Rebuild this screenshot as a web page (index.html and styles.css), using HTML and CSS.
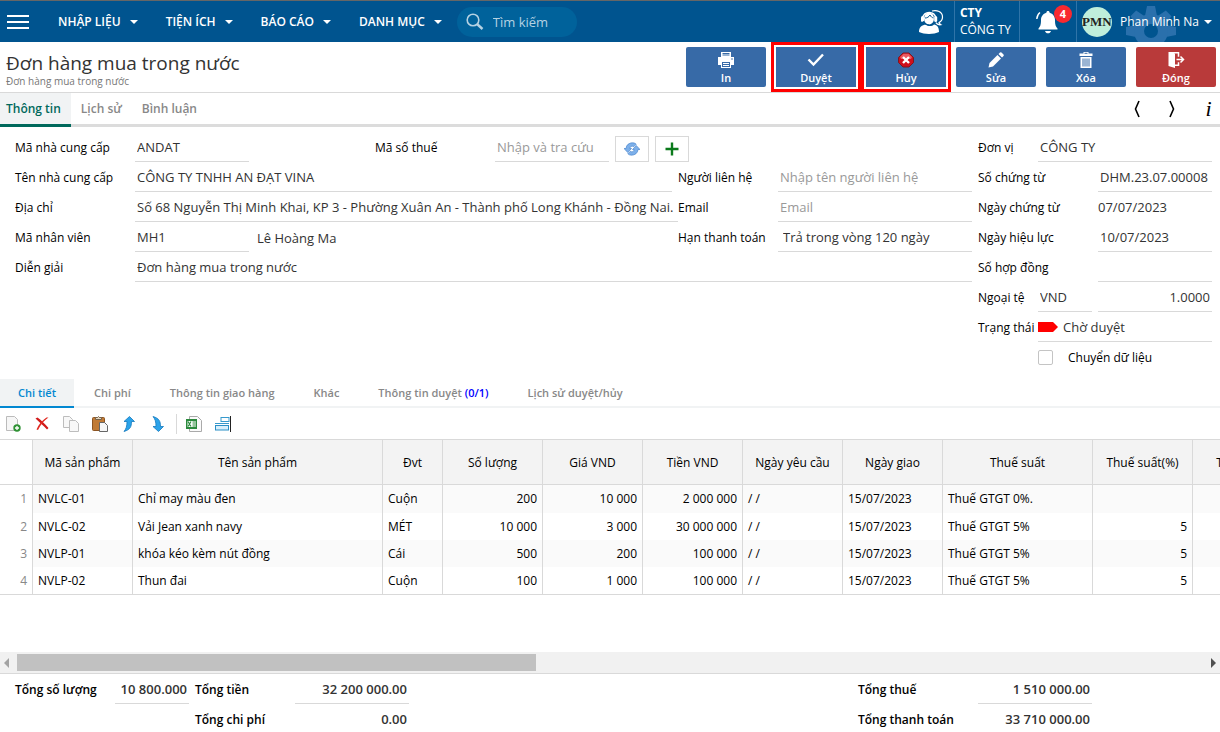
FILE: index.html
```html
<!DOCTYPE html>
<html lang="vi">
<head>
<meta charset="utf-8">
<meta name="viewport" content="width=device-width, initial-scale=1">
<title>Đơn hàng mua trong nước</title>
<link rel="stylesheet" href="styles.css">
</head>
<body>
<header class="topbar">
  <button class="burger" aria-label="Menu"><span></span><span></span><span></span></button>
  <nav class="menu">
    <button class="menu-item">NHẬP LIỆU<i class="caret"></i></button>
    <button class="menu-item">TIỆN ÍCH<i class="caret"></i></button>
    <button class="menu-item">BÁO CÁO<i class="caret"></i></button>
    <button class="menu-item">DANH MỤC<i class="caret"></i></button>
  </nav>
  <div class="search">
    <svg width="18" height="18" viewBox="0 0 18 18" fill="none" stroke="#b5d2e3" stroke-width="1.600"><circle cx="7" cy="7" r="5.800"/><path d="M11 11l5.500 5" stroke-width="2.400"/></svg>
    <input type="text" placeholder="Tìm kiếm" aria-label="Tìm kiếm">
  </div>
  <div class="account">
    <button class="support" aria-label="Hỗ trợ">
      <svg width="26" height="26" viewBox="0 0 26 26"><path d="M14 2c5-1.500 10.500 1 10.500 6 0 3-1.500 4.500-3.500 5.500.3 1 1 1.700 1.800 2.200-2 .3-4-.5-5-2" fill="none" stroke="#fff" stroke-width="1.200"/><path d="M1 23c0-5 3-7 7-7.500 2 2 6 2 8 0 3 .5 5 2.500 5 7.500-5 2.500-15 2.500-20 0z" fill="#fff"/><path d="M4.500 9a7 7.500 0 0 1 13.500 0" fill="none" stroke="#fff" stroke-width="1.500"/><ellipse cx="11" cy="9.500" rx="5" ry="6" fill="#fff"/><rect x="3" y="7" width="3" height="6" rx="1.500" fill="#fff"/><rect x="16.200" y="7" width="3" height="6" rx="1.500" fill="#fff"/><path d="M7 9c2 0 4-1 5-3 1 2 2 2.500 3.500 3" fill="none" stroke="#00548f"/><path d="M5 12c1 3 3 4 6 4" fill="none" stroke="#00548f"/></svg>
    </button>
    <div class="company"><b>CTY</b><span>CÔNG TY</span></div>
    <button class="bell" aria-label="Thông báo">
      <svg width="24" height="24" viewBox="0 0 24 24"><path d="M12 1c1 0 1.600.7 1.600 1.700C17 3.500 19 6.500 19 10c0 5 .8 6.500 2.500 8.500V19.500h-19V18.500C4.200 16.500 5 15 5 10c0-3.500 2-6.500 5.400-7.300C10.400 1.700 11 1 12 1zM9 21h6c-.5 1.600-1.600 2.300-3 2.300S9.500 22.600 9 21z" fill="#fff"/><path d="M4 2.500C2 4 1 6 .8 9M20 2.500c2 1.500 3 3.500 3.200 6.500" fill="none" stroke="#fff" stroke-width="1.400"/></svg>
      <span class="badge">4</span>
    </button>
    <button class="user">
      <svg class="gear" width="50" height="36" viewBox="0 0 50 36"><g fill="#2a70ac"><path d="M21 0h8l2 10H19z"/><path d="M21 0h8l2 10H19z" transform="rotate(45 25 25)"/><path d="M21 0h8l2 10H19z" transform="rotate(90 25 25)"/><path d="M21 0h8l2 10H19z" transform="rotate(-45 25 25)"/><path d="M21 0h8l2 10H19z" transform="rotate(-90 25 25)"/><circle cx="25" cy="25" r="17"/></g><circle cx="25" cy="25" r="7" fill="#00548f"/></svg>
      <span class="avatar">PMN</span><span class="user-name">Phan Minh Na</span><i class="caret"></i>
    </button>
  </div>
</header>

<section class="titlebar">
  <div>
    <h1>Đơn hàng mua trong nước</h1>
    <p>Đơn hàng mua trong nước</p>
  </div>
  <div class="actions">
    <button class="action"><svg width="18" height="16" viewBox="0 0 18 16"><path d="M4 0h10v5H4z" fill="#fff"/><path d="M5.500 1.500h7M5.500 3h7" stroke="#376aa7" stroke-width="1"/><path d="M1 5h16v8h-3v3H4v-3H1z" fill="#fff"/><path d="M5 10h8v5H5z" fill="#376aa7"/><path d="M6 11.500h6M6 13.500h6" stroke="#fff"/><circle cx="15" cy="7" r=".8" fill="#376aa7"/></svg>In</button>
    <button class="action marked"><svg width="18" height="16" viewBox="0 0 18 16"><path d="M1.500 7.500l5 5L16 2.500" fill="none" stroke="#fff" stroke-width="2.400"/></svg>Duyệt</button>
    <button class="action marked"><svg width="18" height="16" viewBox="0 0 18 16"><path d="M6 1h6l4.500 4.500v5L12 15H6l-4.500-4.500v-5z" fill="#d00f1b" stroke="#7d1720"/><path d="M3 5l3.500-3.200h5L15 5l-1 2H4z" fill="#ea5a61"/><path d="M6 5l6 6M12 5l-6 6" stroke="#fff" stroke-width="2.400"/></svg>Hủy</button>
    <button class="action"><svg width="18" height="16" viewBox="0 0 18 16" fill="#fff"><path d="M1.500 15.500l1-4.500L10.500 3 14 6.500 6 14.500zM11.500 2L13 .5q.8-.7 1.500 0l2 2q.7.800 0 1.500L15 5.500z"/></svg>Sửa</button>
    <button class="action"><svg width="18" height="16" viewBox="0 0 18 16"><path d="M2.500 1.500h4V0h5v1.500h4V4h-13zM3.500 5h11v11h-11z" fill="#fff"/><path d="M7.500 1.300h3M6 6.500v8M8 6.500v8M10 6.500v8M12 6.500v8" stroke="#376aa7"/></svg>Xóa</button>
    <button class="action danger"><svg width="18" height="16" viewBox="0 0 18 16"><path d="M1.500 0h5l1.500 2v14l-6.500-2z" fill="#fff"/><path d="M2 .8h9.500v4M8 13.300h3.500v-3" fill="none" stroke="#fff" stroke-width="1.500"/><path d="M9.500 7.500h7M13.500 4.500l3 3-3 3" fill="none" stroke="#fff" stroke-width="1.500"/></svg>Đóng</button>
  </div>
</section>

<nav class="tabs">
  <button class="tab active">Thông tin</button>
  <button class="tab">Lịch sử</button>
  <button class="tab">Bình luận</button>
  <div class="pager">
    <button aria-label="Trước"><svg width="8" height="18" viewBox="0 0 8 18"><path d="M6 1L2.500 9 6 17" fill="none" stroke="#000" stroke-width="1.600"/></svg></button>
    <button aria-label="Sau"><svg width="8" height="18" viewBox="0 0 8 18"><path d="M2 1l3.500 8L2 17" fill="none" stroke="#000" stroke-width="1.600"/></svg></button>
    <button class="info" aria-label="Chi tiết">i</button>
  </div>
</nav>

<form class="form">
  <div class="general">
    <label for="ncc">Mã nhà cung cấp</label>
    <div class="line wide">
      <input id="ncc" class="code" value="ANDAT">
      <label for="mst" class="tax">Mã số thuế</label>
      <input id="mst" class="code" placeholder="Nhập và tra cứu">
      <button type="button" class="square" aria-label="Tra cứu"><svg width="16" height="14" viewBox="0 0 16 14"><g fill="#7db0ea" stroke="#4a86cf" stroke-width=".7"><path d="M0 6.500h2C2.200 3 5 .8 8.500.8c1.500 0 2.700.5 3.700 1.400L9.800 4.600C7.800 3.600 6 4.500 5.800 6.500h1.700l-3.700 4z"/><path d="M16 7.500h-2c-.2 3.500-3 5.700-6.500 5.700-1.500 0-2.700-.5-3.700-1.400l2.400-2.400c2 1 3.800.1 4-1.900H8.500l3.700-4z"/></g></svg></button>
      <button type="button" class="square" aria-label="Thêm"><svg width="14" height="14" viewBox="0 0 14 14"><path d="M7 .5v13M.5 7h13" stroke="#0b7a1b" stroke-width="2.400"/></svg></button>
    </div>
    <label for="ten">Tên nhà cung cấp</label>
    <input id="ten" value="CÔNG TY TNHH AN ĐẠT VINA">
    <label for="lh" class="second">Người liên hệ</label>
    <input id="lh" placeholder="Nhập tên người liên hệ">
    <label for="dc">Địa chỉ</label>
    <input id="dc" class="address" value="Số 68 Nguyễn Thị Minh Khai, KP 3 - Phường Xuân An - Thành phố Long Khánh - Đồng Nai.">
    <label for="em" class="second">Email</label>
    <input id="em" placeholder="Email">
    <label for="nv">Mã nhân viên</label>
    <div class="line"><input id="nv" class="code" value="MH1"><span class="staff">Lê Hoàng Ma</span></div>
    <label for="han" class="second">Hạn thanh toán</label>
    <select id="han"><option>Trả trong vòng 120 ngày</option></select>
    <label for="dg">Diễn giải</label>
    <input id="dg" class="wide" value="Đơn hàng mua trong nước">
  </div>
  <div class="voucher">
    <label for="dv">Đơn vị</label><input id="dv" class="from-2" value="CÔNG TY">
    <label for="sct" class="two">Số chứng từ</label><input id="sct" value="DHM.23.07.00008">
    <label for="nct" class="two">Ngày chứng từ</label><input id="nct" class="plain" value="07/07/2023" readonly>
    <label for="nhl" class="two">Ngày hiệu lực</label><input id="nhl" value="10/07/2023">
    <label for="hd" class="two">Số hợp đồng</label><input id="hd">
    <label for="nt">Ngoại tệ</label><input id="nt" class="currency" value="VND"><input aria-label="Tỷ giá" class="num" value="1.0000">
    <label for="tt">Trạng thái</label>
    <div class="status from-2"><svg width="20" height="10" viewBox="0 0 20 10"><path d="M0 0h15l5 5-5 5H0z" fill="#f00"/></svg><select id="tt"><option>Chờ duyệt</option></select></div>
    <label class="check from-2"><input type="checkbox">Chuyển dữ liệu</label>
  </div>
</form>

<nav class="subtabs">
  <button class="subtab active">Chi tiết</button>
  <button class="subtab">Chi phí</button>
  <button class="subtab">Thông tin giao hàng</button>
  <button class="subtab">Khác</button>
  <button class="subtab">Thông tin duyệt <span class="count">(0/1)</span></button>
  <button class="subtab">Lịch sử duyệt/hủy</button>
</nav>

<div class="tools">
  <button aria-label="Thêm dòng"><svg width="16" height="16" viewBox="0 0 16 16"><path d="M1.500.5h8l3 3v11h-11z" fill="#f6f6f6" stroke="#bbb"/><circle cx="12" cy="12" r="3.700" fill="#2f9234"/><path d="M12 10v4M10 12h4" stroke="#fff" stroke-width="1.300"/></svg></button>
  <button aria-label="Xóa dòng"><svg width="16" height="16" viewBox="0 0 16 16"><path d="M1.500 2.500l2-1c3.500 2.500 7 6 11 10.500l-1.500 1.500C9.500 10 6 6.500 1.500 2.500z" fill="#d11a1a"/><path d="M14.500 1.500C10 4.500 6.500 8.500 4 14L2.500 13.500C4.500 8.500 8 4.500 12.500 1.500z" fill="#e02a22"/></svg></button>
  <button aria-label="Sao chép"><svg width="16" height="16" viewBox="0 0 16 16" fill="#f8f8f8" stroke="#bdbdbd"><path d="M.5.500h6l3 3v8h-9z"/><path d="M6.500 4.500h6l3 3v8h-9z"/></svg></button>
  <button aria-label="Dán"><svg width="16" height="16" viewBox="0 0 16 16"><rect x=".5" y="1.500" width="12" height="13" rx="1" fill="#c07a35" stroke="#8c5523"/><path d="M3.500 3.500V1.500h2l1-1 1 1h2v2z" fill="#e4d6c0" stroke="#75624b"/><path d="M7.500 6.500h5l3 3v6h-8z" fill="#f6f6f6" stroke="#666"/></svg></button>
  <button aria-label="Lên"><svg width="16" height="16" viewBox="0 0 16 16"><path d="M8.500.5l5 5h-3c0 5-1 8-7.500 10 2-2.500 3-5 3-10H3z" fill="#2ba3ea" stroke="#1479bd" stroke-width=".8"/></svg></button>
  <button aria-label="Xuống"><svg width="16" height="16" viewBox="0 0 16 16"><path d="M8.500 15.500l5-5h-3c0-5-1-8-7.500-10 2 2.500 3 5 3 10H3z" fill="#2ba3ea" stroke="#1479bd" stroke-width=".8"/></svg></button>
  <i class="divider"></i>
  <button aria-label="Xuất Excel"><svg width="16" height="16" viewBox="0 0 16 16"><path d="M3.500.5h8l4 4v11h-12z" fill="#fafafa" stroke="#aaa"/><rect x="0" y="3" width="11" height="10" fill="#2c8a3d"/><path d="M1.500 5h8v6h-8z" fill="#fff"/><path d="M2 5.500l3 5M5 5.500l-3 5M6.500 6H9M6.500 8H9M6.500 10H9" stroke="#2c8a3d" stroke-width="1.200"/></svg></button>
  <button aria-label="Căn phải"><svg width="16" height="16" viewBox="0 0 16 16"><rect x="6" y="1.500" width="8" height="4" fill="#fff" stroke="#3699cc"/><rect x=".5" y="9.500" width="13" height="4.500" fill="#d8effb" stroke="#2a8fc6"/><path d="M0 7.500h14" stroke="#3699cc"/><path d="M15.500 0v16" stroke="#222"/></svg></button>
</div>

<main class="pane">
  <table class="items">
    <colgroup><col class="c-no"><col class="c-100"><col class="c-name"><col class="c-unit"><col class="c-100"><col class="c-100"><col class="c-100"><col class="c-100"><col class="c-100"><col class="c-tax"><col class="c-100"><col class="c-100"></colgroup>
    <thead><tr><th></th><th>Mã sản phẩm</th><th>Tên sản phẩm</th><th>Đvt</th><th>Số lượng</th><th>Giá VND</th><th>Tiền VND</th><th>Ngày yêu cầu</th><th>Ngày giao</th><th>Thuế suất</th><th>Thuế suất(%)</th><th>Tiền thuế</th></tr></thead>
    <tbody>
      <tr><td>1</td><td>NVLC-01</td><td>Chỉ may màu đen</td><td>Cuộn</td><td class="num">200</td><td class="num">10 000</td><td class="num">2 000 000</td><td>/ /</td><td>15/07/2023</td><td>Thuế GTGT 0%.</td><td class="num"></td><td></td></tr>
      <tr><td>2</td><td>NVLC-02</td><td>Vải Jean xanh navy</td><td>MÉT</td><td class="num">10 000</td><td class="num">3 000</td><td class="num">30 000 000</td><td>/ /</td><td>15/07/2023</td><td>Thuế GTGT 5%</td><td class="num">5</td><td></td></tr>
      <tr><td>3</td><td>NVLP-01</td><td>khóa kéo kèm nút đồng</td><td>Cái</td><td class="num">500</td><td class="num">200</td><td class="num">100 000</td><td>/ /</td><td>15/07/2023</td><td>Thuế GTGT 5%</td><td class="num">5</td><td></td></tr>
      <tr><td>4</td><td>NVLP-02</td><td>Thun đai</td><td>Cuộn</td><td class="num">100</td><td class="num">1 000</td><td class="num">100 000</td><td>/ /</td><td>15/07/2023</td><td>Thuế GTGT 5%</td><td class="num">5</td><td></td></tr>
    </tbody>
  </table>
</main>
<div class="scroll"><i class="arrow left"></i><div class="track"><div class="thumb"></div></div><i class="arrow right"></i></div>

<footer class="totals">
  <div class="sums">
    <label for="t1" class="l100">Tổng số lượng</label><input id="t1" value="10 800.000" readonly>
    <label for="t2">Tổng tiền</label><input id="t2" value="32 200 000.00" readonly>
    <label for="t3" class="under">Tổng chi phí</label><input id="t3" value="0.00" readonly>
  </div>
  <div class="taxes">
    <label for="t4">Tổng thuế</label><input id="t4" value="1 510 000.00" readonly>
    <label for="t5">Tổng thanh toán</label><input id="t5" value="33 710 000.00" readonly>
  </div>
</footer>
</body>
</html>
```
FILE: styles.css
```css
* { box-sizing: border-box; }

body {
  margin: 0;
  height: 100vh;
  display: flex;
  flex-direction: column;
  overflow: hidden;
  background: #fff;
  color: #000;
  font: 12px/18px "Open Sans", "Noto Sans", sans-serif;
}

button, input, select { font: inherit; color: inherit; margin: 0; padding: 0; border: 0; border-radius: 0; background: none; outline: 0; }
input, select { min-width: 0; width: 100%; appearance: none; }
svg { display: block; flex: none; }
body > * { flex: none; }

/* top bar */
.topbar { display: flex; align-items: center; height: 42px; border-top: 1px solid #666; background: #00548f; color: #fff; }
.burger { display: flex; flex-direction: column; gap: 4px; width: 22px; margin: 0 29px 0 7px; }
.burger span { height: 2px; background: #fff; }
.menu { display: flex; gap: 28px; }
.menu-item { display: flex; align-items: center; gap: 9px; font-weight: 600; white-space: nowrap; }
.caret { border: 4px solid transparent; border-top-color: #fff; border-bottom: 0; }
.search { display: flex; align-items: center; gap: 9px; width: 120px; height: 30px; margin-left: 15px; padding: 0 9px; border-radius: 15px; background: #00629b; font-size: 13px; }
.search input::placeholder { color: #b5d2e3; opacity: 1; }
.account { display: flex; align-self: stretch; margin-left: auto; }
.support { padding: 0 10px; }
.company { display: flex; flex-direction: column; justify-content: center; width: 66px; padding: 0 0 1px 5px; border: solid #2f74a8; border-width: 0 1px; line-height: 17px; white-space: nowrap; }
.bell { position: relative; width: 56px; padding-left: 16px; }
.badge { position: absolute; top: 4px; right: 4px; width: 18px; height: 18px; border-radius: 9px; background: #f9292f; font-weight: 700; font-size: 11px; line-height: 18px; }
.user { position: relative; display: flex; align-items: center; padding: 0 8px 0 5px; border-left: 1px solid #2f74a8; white-space: nowrap; }
.gear { position: absolute; left: 49px; bottom: 0; }
.avatar { width: 30px; height: 30px; border-radius: 15px; background: #bfeedb; color: #222; font: 700 13px/30px "Liberation Serif", serif; }
.user-name { position: relative; margin: 0 5px 0 8px; }

/* title and actions */
.titlebar { display: flex; justify-content: space-between; height: 51px; padding: 5px 4px 0 6px; border-bottom: 1px solid #d9d9d9; }
h1 { margin: 4px 0 0; color: #333; font-size: 19px; line-height: 24px; font-weight: 400; }
.titlebar p { margin: 0; color: #777; font-size: 10px; line-height: 12px; }
.actions { display: flex; gap: 10px; }
.action { display: flex; flex-direction: column; align-items: center; width: 80px; height: 40px; padding-top: 5px; border-radius: 2px; background: #376aa7; color: #fff; font-weight: 600; font-size: 11px; line-height: 20px; }
.marked { border-radius: 0; outline: 3px solid #f00; outline-offset: 2px; }
.danger { background: #b93a3a; }

/* main tabs */
.tabs { display: flex; height: 34px; border-bottom: 3px solid #dcdcdc; }
.tab { height: 34px; padding: 0 10px 3px; color: #888; font-weight: 600; }
.tab.active { padding: 0 10px 0 6px; border-bottom: 3px solid #00695c; background: #f1f3f4; color: #00695c; }
.pager { display: flex; gap: 24px; align-items: center; margin-left: auto; padding-right: 6px; }
.pager button { width: 11px; }
.pager .info { font: italic 400 22px/24px "Liberation Serif", serif; }

/* form */
.form { display: grid; grid-template-columns: 1fr 234px; gap: 6px; padding: 5px 8px 7px 15px; }
.general { display: grid; grid-template-columns: 120px 1fr 106px 194px; grid-auto-rows: 30px; align-content: start; }
.voucher { display: grid; grid-template-columns: 60px 60px 114px; grid-auto-rows: 30px; }
.form label { padding-top: 7px; white-space: nowrap; }
.form .second { padding-left: 6px; }
.form input, .form select { height: 30px; padding: 0 2px; border-bottom: 1px solid #d9d9d9; color: #333; font-size: 13px; }
.form ::placeholder { color: #999; opacity: 1; }
.form select { padding-left: 5px; }
.form .address { width: calc(100% + 6px); padding-right: 0; }
.line { display: flex; min-width: 0; }
.wide { grid-column: 2 / -1; }
.line .code { flex: none; width: 114px; }
.form .tax { width: 120px; margin-left: 126px; }
.square { display: grid; place-items: center; width: 34px; height: 26px; margin: 4px 0 0 6px; border: 1px solid #d9d9d9; }
.staff { padding: 7px 8px; color: #333; font-size: 13px; }
.from-2 { grid-column: 2 / -1; }
.two { grid-column: 1 / 3; }
.voucher .currency { width: 54px; }
.voucher .plain { padding-left: 0; border-color: transparent; }
.num { text-align: right; }
.status { display: flex; align-items: center; border-bottom: 1px solid #d9d9d9; }
.form .status select { border: 0; }
.form .check { display: flex; align-items: center; gap: 15px; padding: 1px 0 0; }
.form .check input { flex: none; width: 15px; height: 15px; border: 1px solid #c4c4c4; border-radius: 2px; }

/* detail tabs and tools */
.subtabs { display: flex; height: 29px; border-bottom: 2px solid #f1f3f4; }
.subtab { height: 29px; padding: 0 19px 2px 20px; color: #888; font-size: 11px; font-weight: 600; white-space: nowrap; }
.subtab.active { width: 74px; padding: 0; border-bottom: 2px solid #0288d1; background: #f1f3f4; color: #0288d1; }
.count { color: #00f; }
.tools { display: flex; align-items: center; gap: 13px; height: 31px; padding-left: 5px; }
.divider { width: 1px; height: 20px; margin: 0 -4px 0 -3px; background: #d9d9d9; }

/* item table */
.pane { flex: 1 1 0; min-height: 0; overflow: hidden; border-top: 1px solid #d9d9d9; }
.items { width: 1293px; table-layout: fixed; border-collapse: separate; border-spacing: 0; border-bottom: 1px solid #d9d9d9; white-space: nowrap; }
.c-no { width: 33px; }
.c-100 { width: 100px; }
.c-name { width: 250px; }
.c-unit { width: 60px; }
.c-tax { width: 150px; }
.items th { height: 45px; padding: 2px 0 0; border: solid #d9d9d9; border-width: 0 1px 1px 0; background: #f3f3f3; font-weight: 400; }
.items td { height: 27px; padding: 0 5px; border-right: 1px solid #d9d9d9; }
.items tr:first-child td { height: 28px; }
.items tr:nth-child(odd) td { background: #fafafa; }
.items th:first-child, .items tr td:first-child { background: #fff; }
.items td:first-child { color: #888; text-align: right; }

/* horizontal scroll bar */
.scroll { display: flex; align-items: center; height: 22px; padding: 2px 0; border-bottom: 1px solid #d9d9d9; background: #f1f1f1; }
.arrow { width: 17px; height: 10px; }
.arrow::before { content: ""; display: block; width: 0; border: 5px solid transparent; }
.arrow.left::before { margin-left: 4px; border-left: 0; border-right-color: #a3a3a3; }
.arrow.right::before { margin-left: 8px; border-left-color: #505050; border-right: 0; }
.track { flex: 1; height: 17px; }
.thumb { width: 43.8%; height: 17px; background: #c1c1c1; }

/* totals */
.totals { display: flex; justify-content: space-between; height: 58px; padding: 0 128px 0 15px; font-weight: 600; }
.sums, .taxes { display: grid; grid-template-rows: 30px 28px; white-space: nowrap; }
.sums { grid-template-columns: 100px 80px 100px 114px; }
.taxes { grid-template-columns: 120px 114px; }
.totals label { padding-top: 7px; }
.totals .under { grid-column: 3; }
.totals input { padding-right: 2px; border-bottom: 1px solid #d9d9d9; color: #333; font-size: 13px; text-align: right; }
#t1 { width: 74px; }
#t3, #t5 { border: 0; padding-top: 2px; }
```
